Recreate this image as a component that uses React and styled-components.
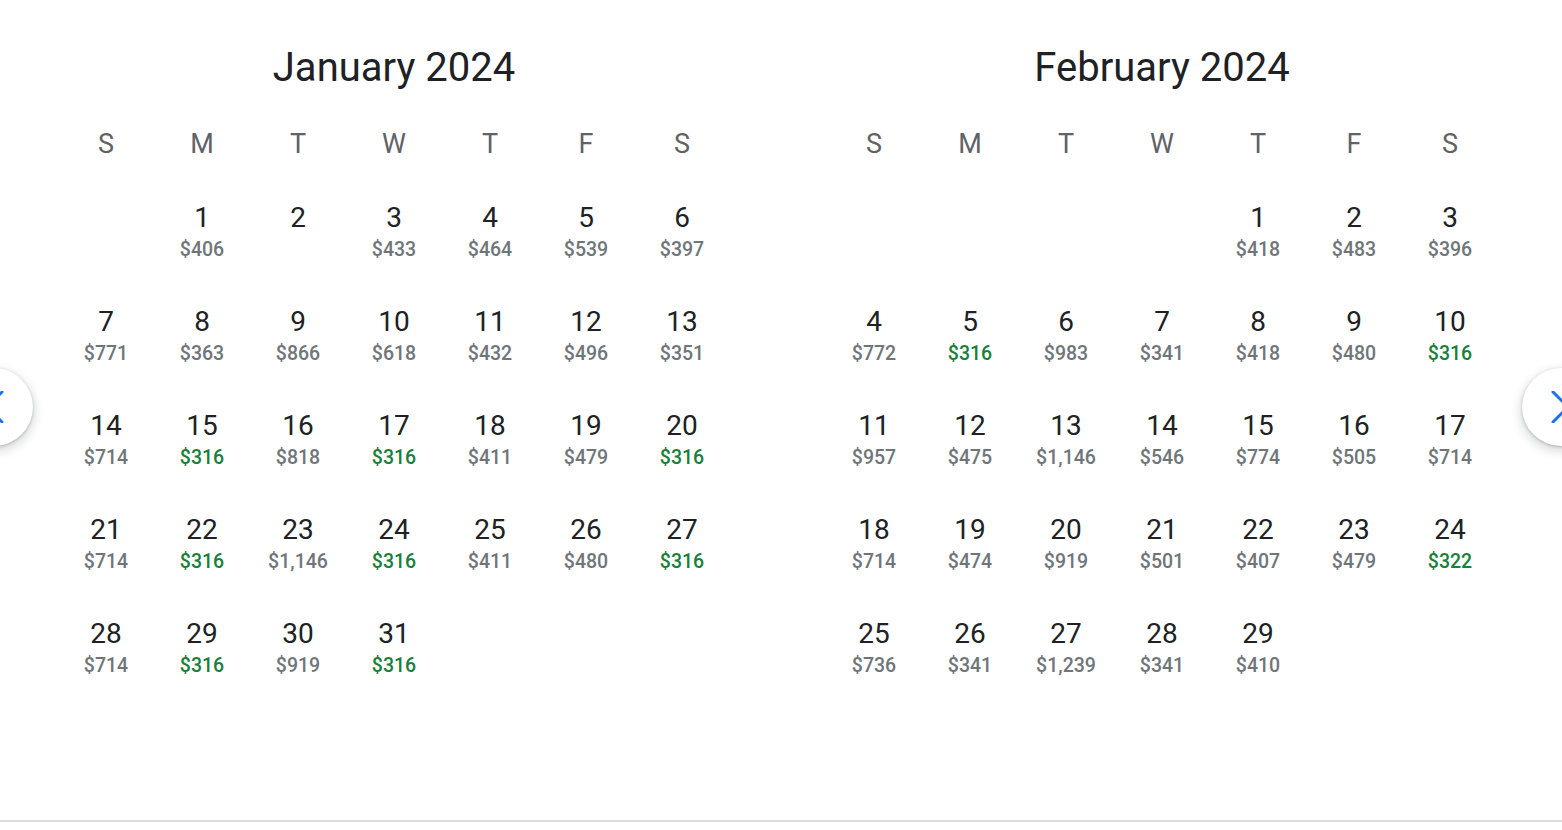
import React from "react";
import styled, { createGlobalStyle } from "styled-components";

const Global = createGlobalStyle`
  html, body { margin: 0; padding: 0; background: #fff; }
  body { font-family: Roboto, "Noto Sans", Arial, sans-serif; overflow: hidden; }
`;

const Page = styled.div`
  position: relative;
  width: 1562px;
  height: 820px;
  border-bottom: 2px solid #dadce0;
  overflow: hidden;
`;

const Months = styled.div`
  display: flex;
  gap: 96px;
  padding: 44px 0 0 58px;
`;

const Month = styled.section`
  width: 672px;
  display: flex;
  flex-direction: column;
`;

const Title = styled.h2`
  margin: 0 0 36px;
  height: 48px;
  font-family: Roboto, "Open Sans", sans-serif;
  font-weight: 400;
  font-size: 40px;
  line-height: 48px;
  color: #202124;
  text-align: center;
`;

const Grid = styled.div`
  display: grid;
  grid-template-columns: repeat(7, 96px);
`;

const WeekRow = styled(Grid)`
  margin-bottom: 41px;
`;

const WeekDay = styled.div`
  height: 32px;
  line-height: 32px;
  font-size: 27px;
  color: #5f6368;
  text-align: center;
`;

const Cell = styled.div`
  height: 104px;
  display: flex;
  flex-direction: column;
  align-items: center;
`;

const DayNum = styled.div`
  height: 34px;
  line-height: 34px;
  font-size: 28px;
  color: #202124;
`;

const Price = styled.div`
  margin-top: 3px;
  height: 24px;
  line-height: 24px;
  font-size: 19.5px;
  font-weight: 500;
  color: ${(p) => (p.$low ? "#188038" : "#70757a")};
`;

const NavButton = styled.button`
  position: absolute;
  top: 368px;
  ${(p) => (p.$side === "left" ? "left: -45px;" : "left: 1522px;")}
  width: 78px;
  height: 78px;
  border-radius: 50%;
  border: none;
  background: #fff;
  box-shadow: 0 1px 3px rgba(60, 64, 67, 0.3), 0 4px 8px 3px rgba(60, 64, 67, 0.15);
  display: flex;
  align-items: center;
  justify-content: center;
  padding: 0;
  cursor: pointer;
`;

const Chevron = ({ dir }) => (
  <svg width="24" height="32" viewBox="0 0 24 32" fill="none">
    <polyline
      points={dir === "right" ? "4,1 19,16 4,31" : "20,1 5,16 20,31"}
      stroke="#1a73e8"
      strokeWidth="3"
      strokeLinecap="round"
      strokeLinejoin="round"
    />
  </svg>
);

const WEEKDAYS = ["S", "M", "T", "W", "T", "F", "S"];

const jan = {
  title: "January 2024",
  offset: 1,
  prices: [
    406, null, 433, 464, 539, 397,
    771, 363, 866, 618, 432, 496, 351,
    714, 316, 818, 316, 411, 479, 316,
    714, 316, 1146, 316, 411, 480, 316,
    714, 316, 919, 316,
  ],
};

const feb = {
  title: "February 2024",
  offset: 4,
  prices: [
    418, 483, 396,
    772, 316, 983, 341, 418, 480, 316,
    957, 475, 1146, 546, 774, 505, 714,
    714, 474, 919, 501, 407, 479, 322,
    736, 341, 1239, 341, 410,
  ],
};

const fmt = (n) => "$" + n.toLocaleString("en-US");

const MonthView = ({ data }) => (
  <Month>
    <Title>{data.title}</Title>
    <WeekRow>
      {WEEKDAYS.map((d, i) => (
        <WeekDay key={i}>{d}</WeekDay>
      ))}
    </WeekRow>
    <Grid>
      {Array.from({ length: data.offset }).map((_, i) => (
        <Cell key={"e" + i} />
      ))}
      {data.prices.map((p, i) => (
        <Cell key={i}>
          <DayNum>{i + 1}</DayNum>
          <Price $low={p !== null && p <= 322}>{p !== null ? fmt(p) : ""}</Price>
        </Cell>
      ))}
    </Grid>
  </Month>
);

export default function App() {
  return (
    <>
      <Global />
      <Page>
        <Months>
          <MonthView data={jan} />
          <MonthView data={feb} />
        </Months>
        <NavButton $side="left" aria-label="Previous">
          <Chevron dir="left" />
        </NavButton>
        <NavButton $side="right" aria-label="Next">
          <Chevron dir="right" />
        </NavButton>
      </Page>
    </>
  );
}
